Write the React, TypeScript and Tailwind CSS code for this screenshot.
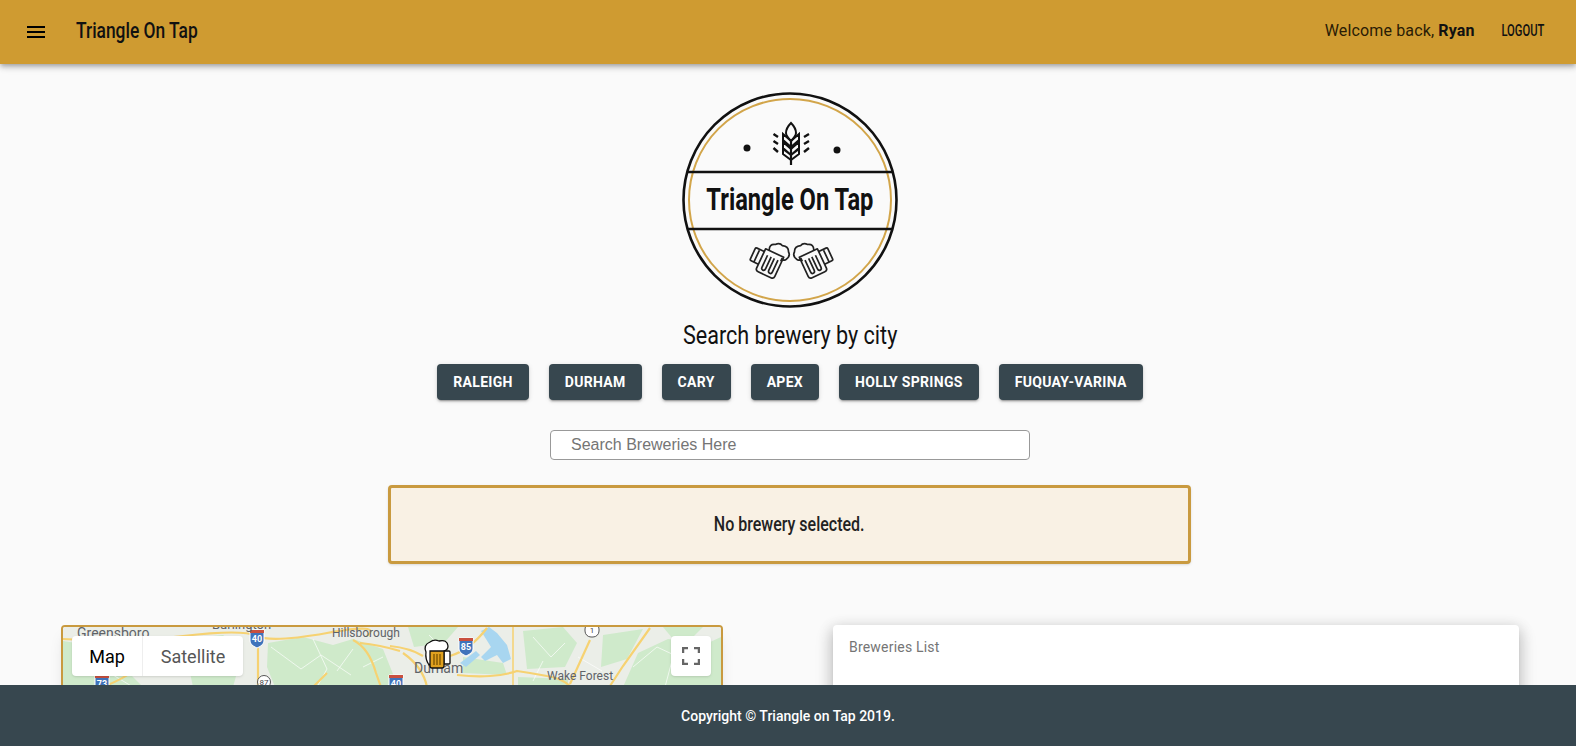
const cities = ["Raleigh", "Durham", "Cary", "Apex", "Holly Springs", "Fuquay-Varina"];

function Mug() {
  return (
    <>
      <g transform="rotate(25 88 171)">
        <path d="M78 160h20v21q0 3-3 3H81q-3 0-3-3z" />
        <path d="M82.5 165v13q0 2.5 2 2.5t2-2.5v-13M90 165v13q0 2.5 2 2.5t2-2.5v-13" />
        <path d="M78 163h-8q-1.500 0-1.500 1.500v11q0 1.500 1.500 1.500h8M73 164v13" />
        <path d="M82 160q-3-6 3-8q3-4 7-2q6-2 8 3q4 3 1 8q-2 3-4 1v3" />
      </g>
    </>
  );
}

function Logo() {
  return (
    <div className="relative w-[216px] h-[216px]">
      <svg viewBox="0 0 216 216" className="w-full h-full">
        <circle cx="108" cy="108" r="106.500" fill="none" stroke="#111" strokeWidth="2.600" />
        <circle cx="108" cy="108" r="101" fill="none" stroke="#d2a54a" strokeWidth="2" />
        <path d="M5 80H211M5 137H211" stroke="#111" strokeWidth="2.600" />
        <circle cx="65" cy="56" r="3.500" fill="#111" />
        <circle cx="155" cy="58" r="3.500" fill="#111" />
        {/* wheat */}
        <g fill="none" stroke="#111" strokeWidth="2">
          <path d="M109 31c-3 3-5 7-5 10 0 3 3 6 5 8 2-2 5-5 5-8 0-3-2-7-5-10z" />
          <path d="M109 49V73" strokeWidth="2.200" />
          <path d="M101 42v6l8 7 8-7v-6l-8 7zM101 50v6l8 7 8-7v-6l-8 7zM101 57v5l8 6 8-6v-5l-8 6z" />
          <path d="M91.500 42l4.500 3M91.500 49l4.500 3M91.500 56l4.500 4M127 42l-5 3M127 49l-5 3M127 56l-5 4" strokeWidth="2.400" />
        </g>
        {/* mugs */}
        <g fill="none" stroke="#222" strokeWidth="1.700" strokeLinejoin="round">
          <Mug />
          <g transform="translate(219 0) scale(-1 1)">
            <Mug />
          </g>
        </g>
      </svg>
      <div className="absolute inset-x-0 top-[88px] flex justify-center text-[32px] leading-[38px] font-bold text-[#111]">
        <span className="inline-block whitespace-nowrap scale-x-[0.74]">Triangle On Tap</span>
      </div>
    </div>
  );
}

function Shield({ x, y, n }: { x: number; y: number; n: string }) {
  return (
    <g transform={`translate(${x} ${y})`}>
      <path d="M-7-8H7V3Q7 7 0 10Q-7 7-7 3z" fill="#3f73bb" stroke="#fff" strokeWidth="1" />
      <path d="M-7-8H7V-5H-7z" fill="#c9503f" />
      <text x="0" y="4" textAnchor="middle" fontSize="9" fontWeight="700" fill="#fff" fontFamily="Roboto, sans-serif">{n}</text>
    </g>
  );
}

function MapTiles() {
  return (
    <svg viewBox="0 0 658 60" preserveAspectRatio="none" className="block w-full h-full">
      <rect width="658" height="60" fill="#ebeee8" />
      <g fill="#cfeacb">
        <path d="M205 16l35-6 30 8 20-6 30 10 12 30-10 8H212l-8-20z" />
        <path d="M120 12l40-4 20 16-10 36h-40z" />
        <path d="M0 14l40 6 40 40H0z" />
        <path d="M345 0h50l-14 16-30 4z" />
        <path d="M460 4l40-4 14 16-12 24-38 2z" />
        <path d="M540 8l40-6-16 30-26 8zM575 26l30-14 40 4 13-6v50H560z" />
        <path d="M400 30l40 6 4 12-44-2zM455 50l50 2v8h-50z" />
        <path d="M600 0h40l-10 10-20 2z" />
      </g>
      <g fill="#a9d6f0">
        <path d="M418 4l8-4 8 6 10 12 4 14-8 4-6-8-12 6-4-4 10-10z" />
        <path d="M397 36l16-12 4 4-14 12z" />
      </g>
      <g fill="none" stroke="#fff" strokeWidth="0.800" opacity="0.85">
        <path d="M208 20l30 22 20-14 30 20M250 12l14 30-10 18M290 22l-16 22M300 40l20-10" />
        <path d="M470 10l18 20 14-14M480 34l-10 20M515 30l24 14M570 40l24-20 30 14M610 30l-8 30M640 18l-16 20" />
        <path d="M366 8l14 14M120 40l40-22M20 30l50 30" />
      </g>
      <g fill="none" stroke="#f6d272" strokeWidth="2.200">
        <path d="M0 12q60 4 120-3t74 0 70-3 40 3" />
        <path d="M195 9V60" />
        <path d="M290 13q16 8 23 33l5 14M297 16q20 2 40 8" />
        <path d="M327 19q20 2 33 10M387 29q20-6 37-28" />
        <path d="M340 26q20 14 24 34M394 48q18 2 33 1t27-5q14 2 30 5 14 2 23 10" />
        <path d="M450 0v60" strokeWidth="1.500" />
        <path d="M527 13l-20 44M587 1l-27 38-13 20" />
        <path d="M40 60q20-8 30-16M250 60l14-14" />
      </g>
      <Shield x={194} y={11} n="40" />
      <Shield x={403} y={19} n="85" />
      <Shield x={333} y={56} n="40" />
      <Shield x={39} y={56} n="73" />
      <circle cx="201" cy="55" r="6.500" fill="#fff" stroke="#555" />
      <text x="201" y="58" textAnchor="middle" fontSize="8" fill="#444" fontFamily="Roboto, sans-serif">87</text>
      <rect x="522" y="-4" width="14" height="14" rx="6" fill="#fff" stroke="#555" />
      <text x="529" y="6" textAnchor="middle" fontSize="8" fill="#444" fontFamily="Roboto, sans-serif">1</text>
      <g fontFamily="Roboto, sans-serif" fill="#5f6368">
        <text x="14" y="11" fontSize="14">Greensboro</text>
        <text x="149" y="2" fontSize="13">Burlington</text>
        <text x="269" y="10" fontSize="12">Hillsborough</text>
        <text x="351" y="46" fontSize="14">Durham</text>
        <text x="484" y="53" fontSize="12">Wake Forest</text>
      </g>
      {/* beer marker */}
      <g stroke="#111" strokeWidth="1.300">
        <path d="M381 24h5q1 0 1 1v11q0 1-1 1h-5z" fill="#fff" />
        <path d="M366 38q-4-6-3-13-3-7 4-10 4-3 9-1 8-2 9 5 0 4-4 5z" fill="#fff" />
        <path d="M367 24h14v15q0 2-2 2h-10q-2 0-2-2z" fill="#e0a11f" />
        <path d="M371 27v11M374 27v11M377 27v11" fill="none" stroke="#7a5200" />
      </g>
    </svg>
  );
}

export default function App() {
  return (
    <div className="h-[746px] overflow-hidden bg-[#fafafa] font-['Roboto',sans-serif]">
      <header className="h-[64px] bg-[#cf9b31] flex items-center justify-between pl-6 pr-8 shadow-[0_2px_4px_-1px_rgba(0,0,0,0.2),0_4px_5px_0_rgba(0,0,0,0.14),0_1px_10px_0_rgba(0,0,0,0.12)] relative">
        <div className="flex items-center gap-[28px]">
          <svg viewBox="0 0 24 24" className="w-6 h-6" fill="#000">
            <path d="M3 18h18v-2H3v2zm0-5h18v-2H3v2zm0-7v2h18V6H3z" />
          </svg>
          <span className="inline-block mb-1 origin-left scale-x-[0.79] whitespace-nowrap text-[22px] font-medium text-[#111]">Triangle On Tap</span>
        </div>
        <div className="flex items-center gap-2 mb-0.5 text-[#2a1c05]">
          <span className="text-[16px] tracking-[0.15px]">Welcome back, <b className="text-[#111]">Ryan</b></span>
          <span className="inline-block origin-right scale-x-[0.7] text-[16px] font-medium text-[#111]">LOGOUT</span>
        </div>
      </header>

      <main className="flex flex-col items-center pt-[28px] pl-[4px]">
        <Logo />
        <h2 className="mt-[11px] text-[26px] leading-[32px] whitespace-nowrap scale-x-[0.83] text-[#111]">Search brewery by city</h2>
        <div className="mt-[13px] flex gap-[20px]">
          {cities.map((c) => (
            <button key={c} className="h-[36px] px-4 rounded bg-[#37474f] text-white text-[14px] font-bold uppercase tracking-[0.3px] shadow-[0_3px_1px_-2px_rgba(0,0,0,0.2),0_2px_2px_0_rgba(0,0,0,0.14),0_1px_5px_0_rgba(0,0,0,0.12)]">
              {c}
            </button>
          ))}
        </div>
        <input
          placeholder="Search Breweries Here"
          className="mt-[30px] w-[480px] h-[30px] bg-white border border-[#999] rounded px-[20px] text-[16px] font-['Liberation_Sans',sans-serif] placeholder:text-[#757575]"
        />
        <div className="mt-[25px] mr-[2px] w-[803px] h-[79px] pb-[2px] border-[3px] border-[#c99a3f] rounded bg-[#f9f1e4] flex items-center justify-center shadow-sm">
          <span className="inline-block scale-x-[0.8] text-[20px] font-medium text-[#222]">No brewery selected.</span>
        </div>

        <div className="mt-[61px] w-full flex pl-[57px] pr-[57px] justify-between items-start">
          <div className="relative w-[662px] h-[300px] border-[2px] border-[#c99a3f] rounded overflow-hidden shadow-lg">
            <div className="h-[60px]">
              <MapTiles />
            </div>
            <div className="absolute left-[9px] top-[9px] h-[40px] flex bg-white text-[18px] rounded-sm shadow">
              <span className="w-[71px] flex items-center justify-center text-black border-r border-[#eee]">Map</span>
              <span className="w-[100px] flex items-center justify-center text-[#565656]">Satellite</span>
            </div>
            <div className="absolute right-[10px] top-[9px] w-[40px] h-[40px] bg-white rounded-sm shadow flex items-center justify-center">
              <svg viewBox="0 0 18 18" className="w-[18px] h-[18px]" fill="none" stroke="#666" strokeWidth="2.500">
                <path d="M1 6V1H6M12 1H17V6M17 12V17H12M6 17H1V12" />
              </svg>
            </div>
          </div>
          <div className="w-[686px] h-[300px] bg-white rounded-sm shadow-[0_8px_17px_2px_rgba(0,0,0,0.14),0_3px_14px_2px_rgba(0,0,0,0.12),0_5px_5px_-3px_rgba(0,0,0,0.2)] px-4 pt-[10px]">
            <span className="text-[14px] tracking-[0.2px] text-[#757575]">Breweries List</span>
          </div>
        </div>
      </main>

      <footer className="fixed bottom-0 inset-x-0 h-[61px] pt-[2px] bg-[#37474f] flex items-center justify-center text-white text-[14px] font-medium">
        Copyright © Triangle on Tap 2019.
      </footer>
    </div>
  );
}
